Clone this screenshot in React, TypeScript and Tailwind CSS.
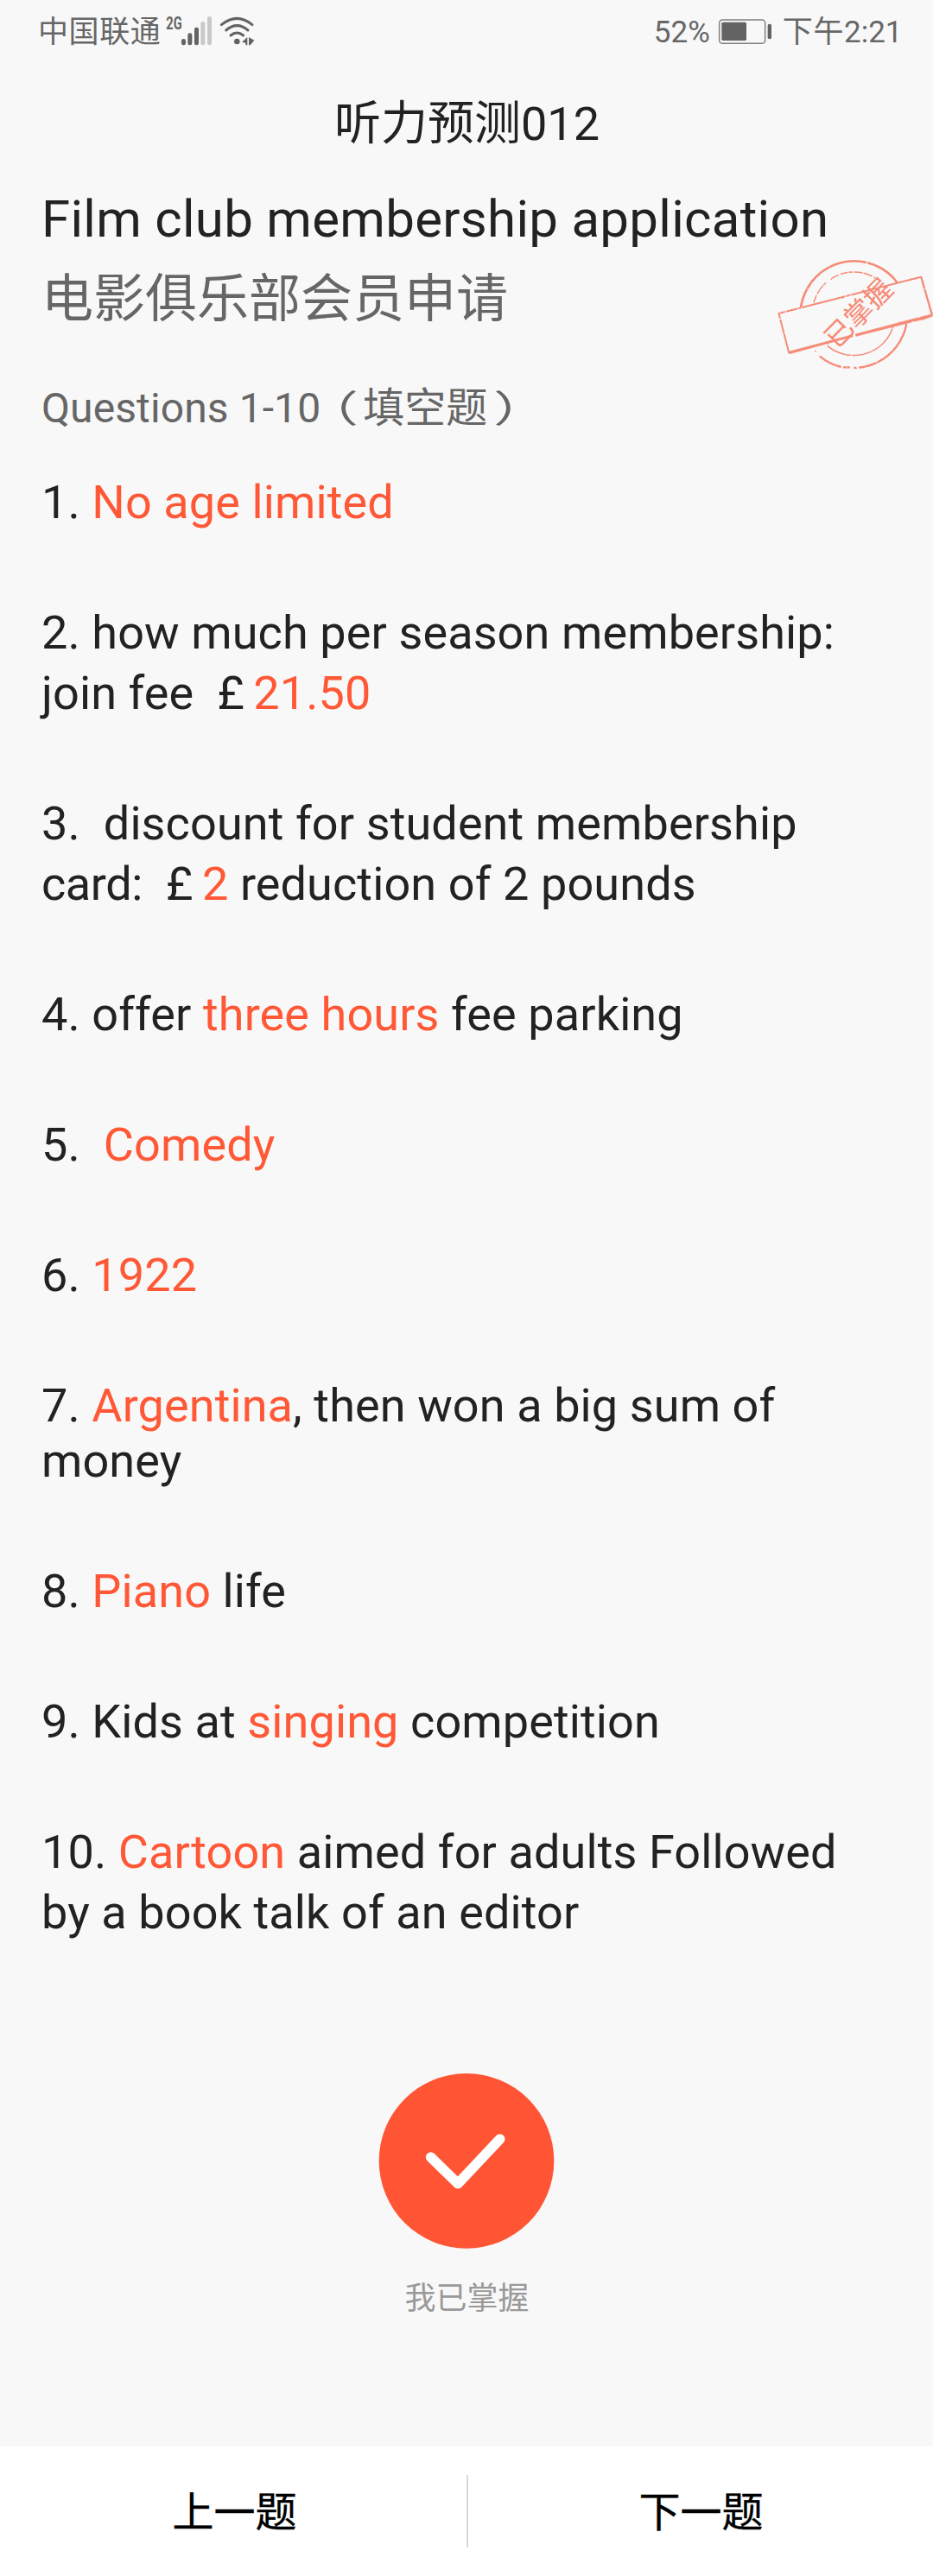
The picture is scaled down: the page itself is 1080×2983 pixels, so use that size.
import { Fragment } from "react";

type Part = string | { answer: string } | { narrow: string } | { pound: true };

const questions: { lines: Part[][]; tight?: boolean }[] = [
  { lines: [["1. ", { answer: "No age limited" }]] },
  {
    lines: [
      ["2. how much per season membership:"],
      ["join fee  ", { pound: true }, " ", { answer: "21.50" }],
    ],
  },
  {
    lines: [
      ["3.  discount for student membership"],
      [{ narrow: "card:" }, "  ", { pound: true }, " ", { answer: "2" }, " reduction of 2 pounds"],
    ],
  },
  { lines: [["4. offer ", { answer: "three hours" }, " fee parking"]] },
  { lines: [["5.  ", { answer: "Comedy" }]] },
  { lines: [["6. ", { answer: "1922" }]] },
  { lines: [["7. ", { answer: "Argentina" }, ", then won a big sum of"], ["money"]], tight: true },
  { lines: [["8. ", { answer: "Piano" }, " life"]] },
  { lines: [["9. Kids at ", { answer: "singing" }, " competition"]] },
  {
    lines: [
      ["10. ", { answer: "Cartoon" }, " aimed for adults Followed"],
      ["by a book talk of an editor"],
    ],
  },
];

function QuestionPart({ part }: { part: Part }) {
  if (typeof part === "string") return <>{part}</>;
  if ("answer" in part) return <span className="text-[#ff5837]">{part.answer}</span>;
  if ("narrow" in part) return <span className="tracking-[-0.4px]">{part.narrow}</span>;
  return <span className="tracking-[-3px]">£</span>;
}

function StatusBar() {
  return (
    <div className="flex h-[76px] shrink-0 items-center justify-between pr-[35.5px] pl-[44px] text-[35px] leading-[76px] text-[#666]">
      <div className="flex items-center">
        <span className="w-[143px] tracking-[0.6px] whitespace-nowrap">中国联通</span>
        {/* Network type, signal strength and wifi */}
        <svg width="113" height="76" viewBox="561 0 339 228" fill="#636363">
          <text
            x="577"
            y="101"
            fontSize="60"
            fontWeight="700"
            textLength="55"
            lengthAdjust="spacingAndGlyphs"
          >
            2G
          </text>
          <rect x="630" y="135" width="15" height="22" rx="7" />
          <rect x="652" y="115" width="15" height="42" rx="7" />
          <rect x="675" y="95" width="15" height="62" rx="7" />
          <rect x="697" y="75" width="15" height="82" rx="7" fill="#c9c9c9" />
          <rect x="720" y="57" width="15" height="100" rx="7" fill="#c9c9c9" />
          <g fill="none" stroke="#636363" strokeWidth="9" strokeLinecap="round">
            <path d="M769 86Q823 42 876 86" />
            <path d="M785 105Q823 73 861 105" />
            <path d="M801 123Q823 105 845 123" />
          </g>
          <circle cx="823" cy="144" r="10" />
          <path d="M840 146L859 129V157H853V149ZM864 129L883 140L869 157H864Z" />
        </svg>
      </div>
      <div className="flex items-center">
        <span>52%</span>
        <svg width="84" height="76" viewBox="305 0 252 228" fill="#636363">
          <rect x="337" y="69" width="159" height="82" rx="11" fill="none" stroke="#808080" strokeWidth="4.5" />
          <rect x="345" y="77" width="86" height="64" rx="5" />
          <rect x="505" y="83" width="13" height="53" rx="6" />
        </svg>
        <span className="whitespace-nowrap">
          <span className="tracking-[0.6px]">下午</span>2:21
        </span>
      </div>
    </div>
  );
}

function Stamp() {
  return (
    <svg
      className="absolute top-[280px] right-0"
      width="200"
      height="160"
      viewBox="0 0 600 480"
      fill="none"
      stroke="#f58b77"
    >
      <defs>
        <filter id="rough" x="0" y="0" width="600" height="480" filterUnits="userSpaceOnUse">
          <feTurbulence type="fractalNoise" baseFrequency="0.12" numOctaves="2" seed="4" />
          <feDisplacementMap in="SourceGraphic" scale="5" xChannelSelector="R" yChannelSelector="G" />
        </filter>
      </defs>
      <g filter="url(#rough)">
        {/* Outer ring */}
        <path d="M141 230A187 187 0 0 1 477 143" strokeWidth="8" strokeDasharray="70 1 110 1 130 4 200" />
        <path d="M508 285A187 187 0 0 1 325 438" strokeWidth="7" strokeDasharray="175 2 40 1 23 6 40" />
        <path d="M312 436L288 436M281 435Q240 425 206 397" strokeWidth="7" />
        <path d="M190 378l4 4" strokeWidth="4" />
        {/* Inner ring */}
        <path d="M186 212A143 143 0 0 1 240 132" strokeWidth="4" strokeDasharray="28 5 50" />
        <path d="M244 130A143 143 0 0 1 400 126" strokeWidth="4.5" strokeDasharray="32 7 26 3 15 4 30 3" />
        <path d="M463 290A143 143 0 0 1 233 361" strokeWidth="4.5" strokeDasharray="120 2 70 3 100" />
        {/* Banner */}
        <path d="M64 249L558 122" strokeWidth="6" strokeDasharray="24 3 40 2 170 3 16 2 300" />
        <path d="M558 120L598 258" strokeWidth="7" strokeDasharray="45 2 90" />
        <path d="M64 247L100 387" strokeWidth="6" strokeDasharray="20 4 50 2 90" />
        <path
          d="M98 382L320 323L322 329L102 389ZM330 321L535 267L598 251V259L570 269L540 275L333 328Z"
          fill="#f58b77"
          strokeWidth="2"
        />
      </g>
      <text
        transform="translate(273 315) rotate(-45.5)"
        x="-48"
        y="36"
        fontSize="96"
        fontFamily="'Noto Sans CJK SC', sans-serif"
        fill="#f58b77"
        stroke="none"
      >
        已掌握
      </text>
    </svg>
  );
}

export default function App() {
  return (
    <div className="relative flex h-[2983px] w-[1080px] flex-col overflow-hidden bg-[#f8f8f8] font-[Roboto,'Noto_Sans_CJK_SC',sans-serif] text-[#222]">
      <StatusBar />
      <header className="h-[135px] shrink-0 pl-px text-center text-[54px] leading-[135px]">听力预测012</header>

      <main className="px-12 whitespace-pre">
        <h1 className="mt-[7px] text-[60px] leading-[71px] tracking-[0.28px]">Film club membership application</h1>
        <h2 className="mt-[22px] text-[60px] leading-[71px] text-[#666]">电影俱乐部会员申请</h2>
        <h3 className="mt-[62px] flex h-[57px] text-[48px] leading-[57px] text-[#666]">
          <span className="mr-px tracking-[0.1px]">Questions 1-10</span>
          <span className="block w-12 origin-[76%_60%] translate-x-[-9px] translate-y-[1px] scale-x-[1.35] scale-y-90">（</span>
          <span>填空题</span>
          <span className="block w-12 origin-[24%_60%] translate-x-[11px] translate-y-[1px] scale-x-[1.35] scale-y-90">）</span>
        </h3>
        <div className="mt-[46px] flex flex-col gap-[81px] text-[54px] leading-[70px] tracking-[0.11px]">
          {questions.map((q, i) => (
            <p key={i} className={q.tight ? "py-[3px] leading-[64px]" : ""}>
              {q.lines.map((line, j) => (
                <Fragment key={j}>
                  {j > 0 && <br />}
                  {line.map((part, k) => (
                    <QuestionPart key={k} part={part} />
                  ))}
                </Fragment>
              ))}
            </p>
          ))}
        </div>
      </main>

      <Stamp />

      <div className="mt-[150px] flex flex-col items-center">
        <svg width="204" height="204" viewBox="115 89 612 612">
          <circle cx="421" cy="396" r="304" fill="#ff5535" />
          <path
            d="M297 383L391 475L537 320"
            fill="none"
            stroke="#fff"
            strokeWidth="35"
            strokeLinecap="round"
            strokeLinejoin="round"
          />
        </svg>
        <span className="mt-[37px] pl-px text-[36px] leading-[42px] text-[#999]">我已掌握</span>
      </div>

      <footer className="mt-auto flex h-[150px] shrink-0 items-center bg-white text-[48px] text-black [-webkit-text-stroke:0.4px_black]">
        <button className="flex-1 pt-1 pl-[3px]">上一题</button>
        <div className="h-[84px] w-[2px] bg-[#d8d8d8]" />
        <button className="flex-1 pt-1 pl-px">下一题</button>
      </footer>
    </div>
  );
}
